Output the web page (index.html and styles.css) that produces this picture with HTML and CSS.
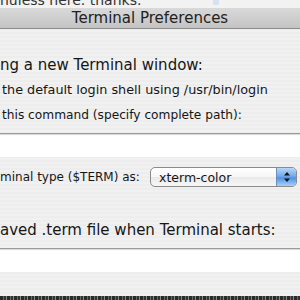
FILE: index.html
```html
<!DOCTYPE html>
<html>
<head>
<meta charset="utf-8">
<link rel="stylesheet" href="styles.css">
</head>
<body>
<div class="behind">
  <span class="behind-text">nuless here. thanks.</span>
  <span class="behind-mark"></span>
</div>
<div class="titlebar">Terminal Preferences</div>
<div class="content">
  <div class="heading h-first">ng a new Terminal window:</div>
  <div class="opt opt-first">the default login shell using /usr/bin/login</div>
  <div class="opt opt-second">this command (specify complete path):</div>
  <div class="field field-one"></div>
  <div class="term-row">
    <span class="term-label">minal type ($TERM) as:</span>
    <div class="popup">
      <span class="popup-text">xterm-color</span>
      <span class="stepper">
        <svg width="8" height="12" viewBox="0 0 8 12"><path d="M4 1 L7 4.5 H1 Z" fill="#111"/><path d="M4 11 L7 7.5 H1 Z" fill="#111"/></svg>
      </span>
    </div>
  </div>
  <div class="heading h-second">aved .term file when Terminal starts:</div>
  <div class="field field-two"></div>
</div>
<div class="bottom-strip"></div>
</body>
</html>
```
FILE: styles.css
```css
html, body {
  margin: 0;
  padding: 0;
}
body {
  width: 300px;
  height: 300px;
  overflow: hidden;
  background: repeating-linear-gradient(#ededed 0 2px, #f1f1f1 2px 4px);
  font-family: "DejaVu Sans", "Liberation Sans", sans-serif;
  color: #161616;
}
.behind {
  height: 8px;
  overflow: hidden;
  background: #f2f2f2;
  display: flex;
  align-items: flex-start;
}
.behind-text {
  display: block;
  margin-top: -7px;
  font-size: 14px;
  line-height: 14px;
  color: #333;
}
.behind-mark {
  display: block;
  margin-left: 72px;
  width: 6px;
  height: 5px;
  background: #d7e2ee;
}
.titlebar {
  height: 20px;
  line-height: 20px;
  text-align: center;
  font-size: 15px;
  color: #222;
  background: linear-gradient(#d9d9d9, #c4c4c4);
  border-bottom: 1px solid #8c8c8c;
}
.content {
  display: flex;
  flex-direction: column;
}
.heading {
  font-size: 15px;
  line-height: 18px;
  white-space: nowrap;
}
.h-first { margin-top: 27px; }
.opt {
  line-height: 16px;
  padding-left: 2px;
  white-space: nowrap;
}
.opt-first { margin-top: 8px; font-size: 12.8px; }
.opt-second { margin-top: 9px; font-size: 12.2px; }
.field {
  height: 23px;
  background: #fff;
  border-top: 1px solid #9a9a9a;
  margin-left: -2px;
  margin-right: -2px;
  box-shadow: inset 0 1px 1px #d8d8d8;
}
.field-one { margin-top: 10px; }
.term-row {
  margin-top: 10px;
  height: 20px;
  display: flex;
  align-items: center;
}
.term-label {
  font-size: 12px;
  white-space: nowrap;
}
.popup {
  margin-left: auto;
  margin-right: 3px;
  width: 145px;
  height: 18px;
  border: 1px solid #8a8a8a;
  border-radius: 5px;
  background: linear-gradient(#ffffff, #f6f6f6 50%, #e9e9e9 51%, #f7f7f7);
  display: flex;
  align-items: center;
  overflow: hidden;
}
.popup-text {
  font-size: 12.5px;
  padding-left: 8px;
  flex: 1;
}
.stepper {
  width: 19px;
  height: 18px;
  border-left: 1px solid #6c8fbf;
  background: linear-gradient(#b8d6f7, #74abe9 45%, #4f93e3 55%, #a8d0fb);
  display: flex;
  align-items: center;
  justify-content: center;
}
.h-second { margin-top: 34px; }
.field-two { margin-top: 9px; }
.bottom-strip {
  position: fixed;
  left: 0;
  bottom: 0;
  width: 300px;
  height: 4px;
  background: repeating-linear-gradient(90deg, #2a2a2a 0 3px, #6a6a6a 3px 4px, #333 4px 6px, #888 6px 7px);
}
```
